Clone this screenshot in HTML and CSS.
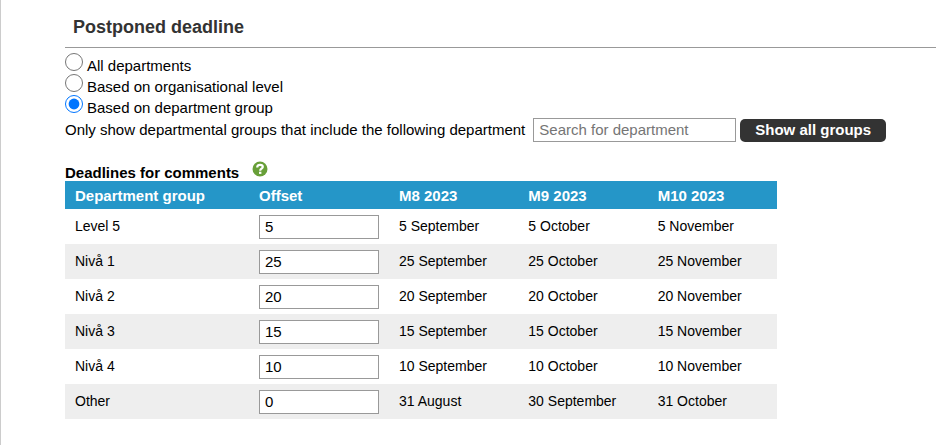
FILE: index.html
```html
<!DOCTYPE html>
<html lang="en">
<head>
<meta charset="utf-8">
<title>Postponed deadline</title>
<link rel="stylesheet" href="styles.css">
</head>
<body>
<main class="panel">
  <h1 class="title">Postponed deadline</h1>
  <form class="settings">
    <div class="options" role="radiogroup" aria-label="Postponed deadline">
      <label class="option"><input type="radio" name="scope"><span>All departments</span></label>
      <label class="option"><input type="radio" name="scope"><span>Based on organisational level</span></label>
      <label class="option"><input type="radio" name="scope" checked><span>Based on department group</span></label>
    </div>
    <div class="filter">
      <label class="filter-label" for="department">Only show departmental groups that include the following department</label>
      <input class="field search" id="department" type="text" placeholder="Search for department">
      <button class="button" type="button">Show all groups</button>
    </div>
    <div class="caption">
      <h2 class="subtitle" id="deadlines">Deadlines for comments</h2>
      <svg class="help" viewBox="0 0 16 16" aria-hidden="true">
        <circle cx="8" cy="8" r="7.5" fill="#689f38"/>
        <path d="M5.2 6.4C5.2 4.6 6.4 3.9 8 3.9s2.8.7 2.8 2.1c0 1.7-2.6 1.8-2.6 3.7" fill="none" stroke="#fff" stroke-width="2.2"/>
        <rect x="7" y="10.7" width="2.4" height="2.2" fill="#fff"/>
      </svg>
    </div>
    <table class="deadlines" aria-labelledby="deadlines">
      <colgroup><col class="col-group"><col class="col-offset"><col class="col-date"><col class="col-date"><col class="col-date"></colgroup>
      <thead>
        <tr><th>Department group</th><th>Offset</th><th>M8 2023</th><th>M9 2023</th><th>M10 2023</th></tr>
      </thead>
      <tbody>
        <tr><td><label for="o1">Level 5</label></td><td class="offset"><input class="field" id="o1" type="text" value="5"></td><td>5 September</td><td>5 October</td><td>5 November</td></tr>
        <tr><td><label for="o2">Nivå 1</label></td><td class="offset"><input class="field" id="o2" type="text" value="25"></td><td>25 September</td><td>25 October</td><td>25 November</td></tr>
        <tr><td><label for="o3">Nivå 2</label></td><td class="offset"><input class="field" id="o3" type="text" value="20"></td><td>20 September</td><td>20 October</td><td>20 November</td></tr>
        <tr><td><label for="o4">Nivå 3</label></td><td class="offset"><input class="field" id="o4" type="text" value="15"></td><td>15 September</td><td>15 October</td><td>15 November</td></tr>
        <tr><td><label for="o5">Nivå 4</label></td><td class="offset"><input class="field" id="o5" type="text" value="10"></td><td>10 September</td><td>10 October</td><td>10 November</td></tr>
        <tr><td><label for="o6">Other</label></td><td class="offset"><input class="field" id="o6" type="text" value="0"></td><td>31 August</td><td>30 September</td><td>31 October</td></tr>
      </tbody>
    </table>
  </form>
</main>
</body>
</html>
```
FILE: styles.css
```css
* {
  box-sizing: border-box;
}

body {
  margin: 0;
  background: #fff;
  color: #000;
  font: 15px/20px "Liberation Sans", Arial, sans-serif;
}

.panel {
  min-height: 100vh;
  padding: 6px 0 24px 64px;
  border-left: 1px solid #ccc;
}

.title {
  margin: 0;
  padding: 10px 8px 9px;
  border-bottom: 1px solid #999;
  color: #333;
  font-size: 18px;
  line-height: 22px;
}

.options {
  padding-top: 5px;
}

.option {
  display: flex;
  align-items: flex-start;
  gap: 4px;
  height: 21px;
}

.option input {
  width: 18px;
  height: 18px;
  margin: 0;
}

.option span {
  padding-top: 3px;
}

.filter {
  display: flex;
  align-items: center;
  gap: 4px;
  margin-top: 2px;
}

.filter-label {
  padding-right: 4px;
}

.field {
  display: block;
  width: 120px;
  height: 24px;
  padding: 0 5px;
  border: 1px solid #999;
  border-radius: 0;
  background: #fff;
  color: #000;
  font: inherit;
}

.field::placeholder {
  color: #757575;
}

.search {
  width: 203px;
  padding-bottom: 2px;
}

.button {
  height: 23px;
  padding: 0 15px;
  border: 0;
  border-radius: 5px;
  background: #333;
  color: #fff;
  font: bold 15px/20px "Liberation Sans", Arial, sans-serif;
}

.caption {
  display: flex;
  align-items: flex-start;
  gap: 13px;
  margin-top: 19px;
}

.subtitle {
  margin: 0;
  padding-top: 2px;
  font-size: 15px;
  line-height: 20px;
  height: 20px;
}

.help {
  width: 16px;
  height: 16px;
}

.deadlines {
  width: 712px;
  max-width: 100%;
  border-collapse: collapse;
  table-layout: fixed;
}

.col-group {
  width: 184px;
}

.col-offset {
  width: 140px;
}

.deadlines th {
  height: 28px;
  padding: 2px 10px 0;
  background: #2596c8;
  color: #fff;
  text-align: left;
}

.deadlines td {
  height: 35px;
  padding: 0 10px 2px;
  font-size: 14px;
}

.deadlines .offset {
  padding-bottom: 0;
  font-size: 15px;
}

.deadlines tbody tr:nth-child(even) {
  background: #eee;
}
```
